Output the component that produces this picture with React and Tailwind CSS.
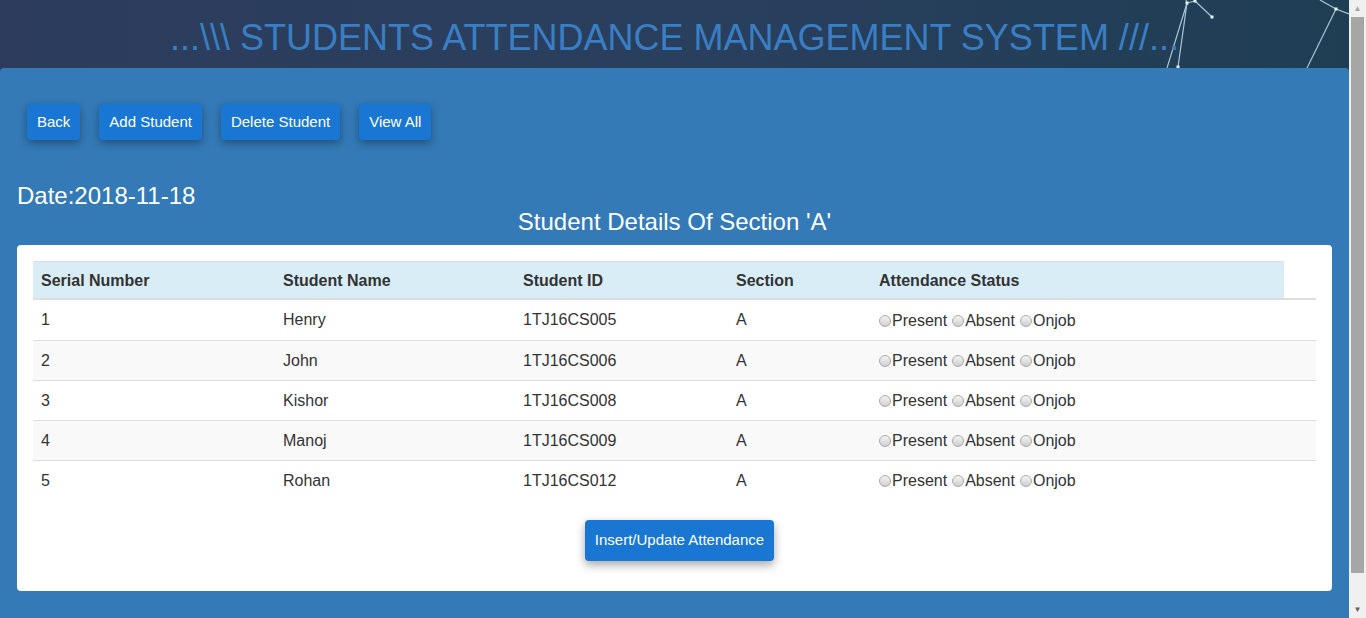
import React from 'react';

const students = [
  { sno: 1, name: 'Henry', id: '1TJ16CS005', section: 'A' },
  { sno: 2, name: 'John', id: '1TJ16CS006', section: 'A' },
  { sno: 3, name: 'Kishor', id: '1TJ16CS008', section: 'A' },
  { sno: 4, name: 'Manoj', id: '1TJ16CS009', section: 'A' },
  { sno: 5, name: 'Rohan', id: '1TJ16CS012', section: 'A' },
];

const cols = 'grid grid-cols-[242px_240px_213px_143px_413px_1fr]';

function Radio({ label }) {
  return (
    <label className="inline-flex items-center">
      <span className="w-[12px] h-[12px] rounded-full border border-[#a9a9a9] bg-gradient-to-b from-[#f4f4f4] to-[#cfcfcf] mr-[1px]" />
      <span>{label}</span>
    </label>
  );
}

function Header() {
  return (
    <div className="relative h-[68px] shrink-0 bg-gradient-to-r from-[#2d3c5d] via-[#293f5e] to-[#1f3e54] flex items-center justify-center">
      <svg className="absolute inset-0" width="1349" height="68" viewBox="0 0 1349 68">
        <g stroke="#bfe0ee" strokeWidth="1.2" opacity="0.85" fill="none">
          <line x1="1186" y1="0" x2="1187" y2="3" />
          <line x1="1187" y1="3" x2="1167" y2="68" />
          <line x1="1187" y1="3" x2="1178" y2="67" />
          <line x1="1195" y1="1" x2="1212" y2="17" />
          <line x1="1187" y1="3" x2="1195" y2="1" />
          <line x1="1320" y1="0" x2="1336" y2="9" />
          <line x1="1336" y1="9" x2="1307" y2="68" />
          <line x1="1336" y1="9" x2="1349" y2="14" />
        </g>
        <g fill="#e6f4fa">
          <rect x="1185.5" y="1.5" width="3" height="3" />
          <rect x="1193.5" y="-0.5" width="3" height="3" />
          <rect x="1210.5" y="15.5" width="3" height="3" />
          <rect x="1176.5" y="65.5" width="3" height="3" />
          <rect x="1334.5" y="7.5" width="3" height="3" />
        </g>
      </svg>
      <h1 className="relative text-[36px] leading-[40px] text-[#3a7ec4] mt-[8px] whitespace-pre">{'...\\\\\\ STUDENTS ATTENDANCE MANAGEMENT SYSTEM ///...'}</h1>
    </div>
  );
}

function Scrollbar() {
  return (
    <div className="w-[17px] shrink-0 bg-[#f0f0f0] flex flex-col items-center">
      <div className="h-[17px] flex items-center justify-center text-[8px] leading-none text-[#a3a3a3]">▲</div>
      <div className="w-[13px] h-[556px] bg-[#a6a6a6]" />
      <div className="flex-1" />
      <div className="h-[17px] flex items-center justify-center text-[8px] leading-none text-[#606060]">▼</div>
    </div>
  );
}

export default function App() {
  const buttons = ['Back', 'Add Student', 'Delete Student', 'View All'];
  return (
    <div className="flex w-[1366px] h-[618px] overflow-hidden bg-[#25405c] font-['Liberation_Sans',Arial,sans-serif]">
      <div className="flex-1 flex flex-col min-w-0">
        <Header />
        <div className="flex-1 bg-[#337ab7] rounded-t-[4px] pt-[36px]">
          <div className="flex gap-[19px] pl-[27px]">
            {buttons.map(b => (
              <button key={b} className="h-[36px] px-[10px] text-[15px] text-white bg-[#1976d2] rounded-[4px] shadow-[0_3px_8px_rgba(0,0,0,0.35)]">{b}</button>
            ))}
          </div>
          <div className="mt-[44px] pl-[17px] text-[24px] leading-[24px] text-white">Date:2018-11-18</div>
          <h3 className="mt-[2px] text-center text-[24px] leading-[24px] text-white">Student Details Of Section 'A'</h3>
          <div className="mx-[17px] mt-[11px] bg-white rounded-[4px] p-[16px] text-[16px] text-[#333]">
            <div className={`${cols} h-[39px] border-b-2 border-[#ddd] font-bold`}>
              {['Serial Number', 'Student Name', 'Student ID', 'Section', 'Attendance Status'].map(h => (
                <div key={h} className="bg-[#d9edf7] border-t border-[#ddd] px-[8px] pt-[2px] flex items-center">{h}</div>
              ))}
              <div />
            </div>
            {students.map((s, i) => (
              <div key={s.sno} className={`${cols} h-[40px] items-center ${i > 0 ? 'border-t border-[#ddd]' : ''} ${i % 2 === 1 ? 'bg-[#f9f9f9]' : ''}`}>
                <div className="px-[8px]">{s.sno}</div>
                <div className="px-[8px]">{s.name}</div>
                <div className="px-[8px]">{s.id}</div>
                <div className="px-[8px]">{s.section}</div>
                <div className="px-[8px] flex items-center gap-[5px] pt-[1px]">
                  <Radio label="Present" />
                  <Radio label="Absent" />
                  <Radio label="Onjob" />
                </div>
                <div />
              </div>
            ))}
            <div className="flex justify-center pl-[10px] mt-[20px] mb-[14px]">
              <button className="h-[41px] px-[10px] text-[15px] text-white bg-[#1976d2] rounded-[4px] shadow-[0_4px_10px_rgba(0,0,0,0.35)]">Insert/Update Attendance</button>
            </div>
          </div>
        </div>
      </div>
      <Scrollbar />
    </div>
  );
}
